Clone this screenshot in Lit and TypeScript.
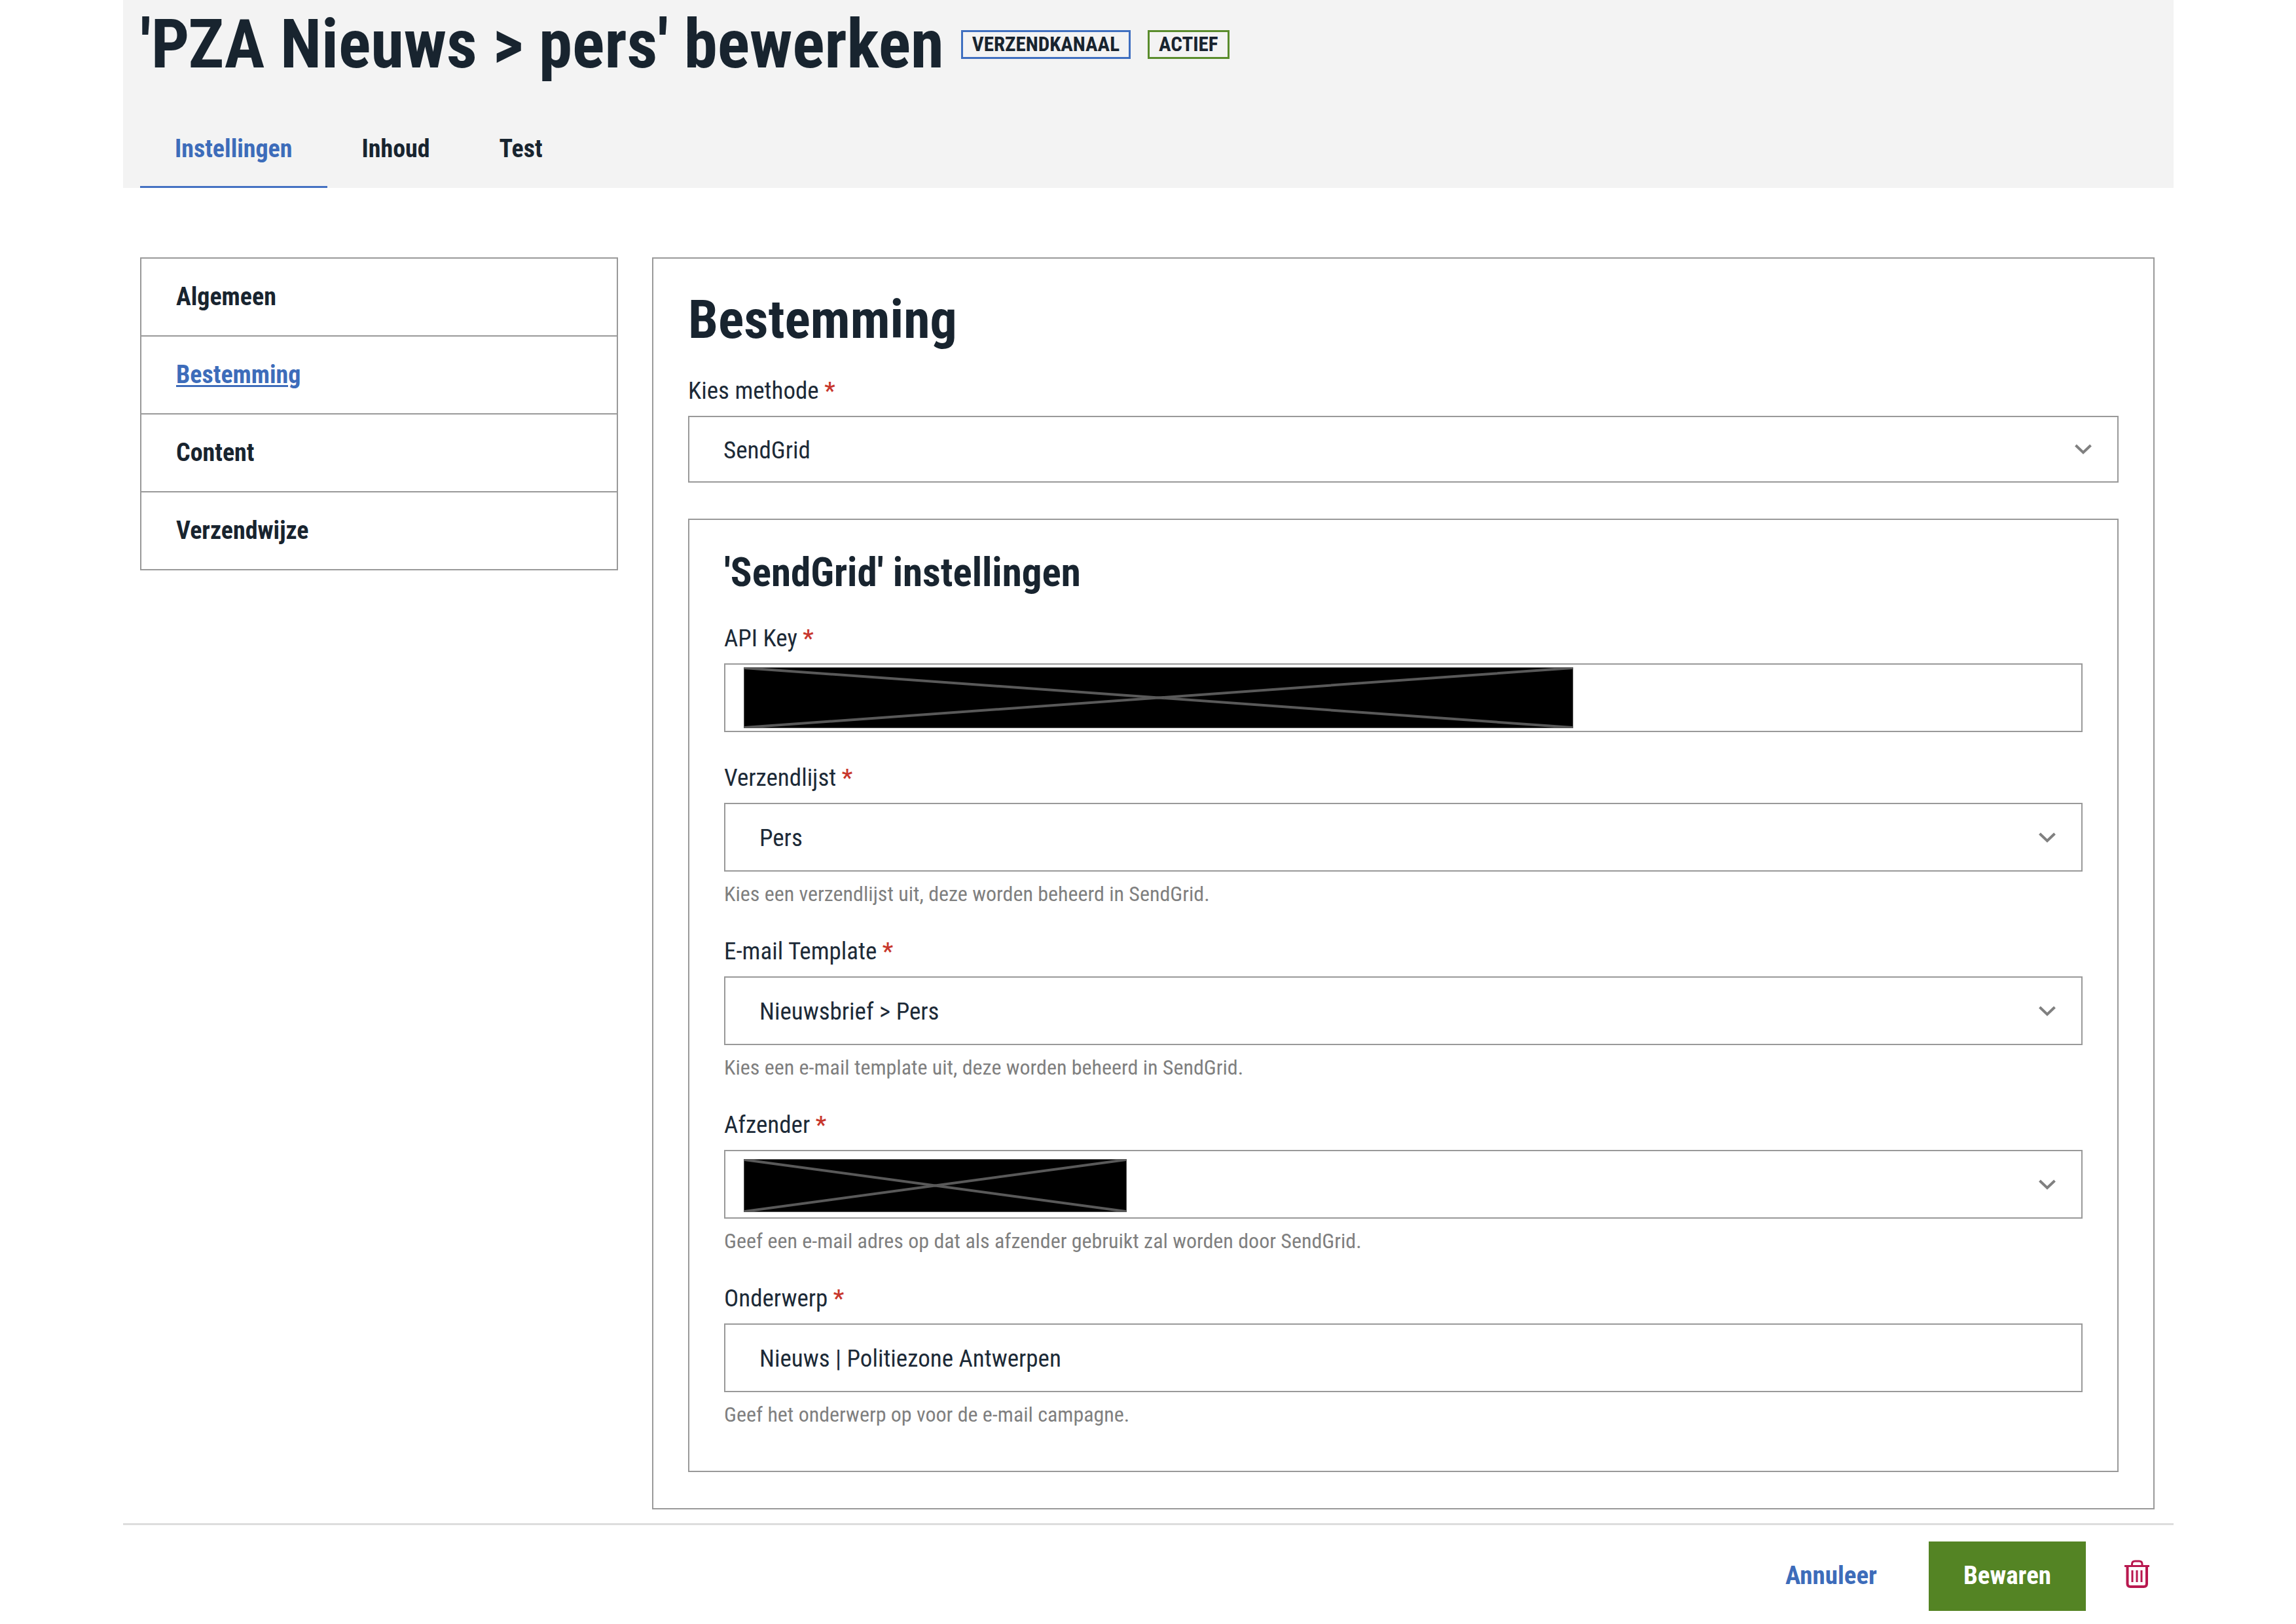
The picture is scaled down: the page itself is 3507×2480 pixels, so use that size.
import { LitElement, html, css, svg, nothing } from "lit";
import { customElement, property, state } from "lit/decorators.js";
import { classMap } from "lit/directives/class-map.js";

type FieldKind = "text" | "select";

interface FieldConfig {
  id: string;
  label: string;
  kind: FieldKind;
  value?: string;
  help?: string;
  redacted?: "long" | "short";
}

const METHOD: FieldConfig = {
  id: "method",
  label: "Kies methode",
  kind: "select",
  value: "SendGrid",
};

const SENDGRID_FIELDS: FieldConfig[] = [
  { id: "api-key", label: "API Key", kind: "text", redacted: "long" },
  {
    id: "list",
    label: "Verzendlijst",
    kind: "select",
    value: "Pers",
    help: "Kies een verzendlijst uit, deze worden beheerd in SendGrid.",
  },
  {
    id: "template",
    label: "E-mail Template",
    kind: "select",
    value: "Nieuwsbrief > Pers",
    help: "Kies een e-mail template uit, deze worden beheerd in SendGrid.",
  },
  {
    id: "sender",
    label: "Afzender",
    kind: "select",
    redacted: "short",
    help: "Geef een e-mail adres op dat als afzender gebruikt zal worden door SendGrid.",
  },
  {
    id: "subject",
    label: "Onderwerp",
    kind: "text",
    value: "Nieuws | Politiezone Antwerpen",
    help: "Geef het onderwerp op voor de e-mail campagne.",
  },
];

@customElement("form-field")
export class FormField extends LitElement {
  @property({ attribute: false }) config!: FieldConfig;
  @property({ type: Boolean, reflect: true }) compact = false;

  static styles = css`
    :host {
      display: block;
    }
    .label {
      display: block;
      margin-bottom: 14px;
      font-size: 37px;
      line-height: 48px;
    }
    .required {
      color: #c8372d;
      font-weight: 500;
    }
    .box {
      display: grid;
      align-items: center;
    }
    .box > * {
      grid-area: 1 / 1;
    }
    .control {
      appearance: none;
      box-sizing: border-box;
      width: 100%;
      height: 105px;
      margin: 0;
      padding: 2px 52px 0;
      border: 2px solid #999;
      border-radius: 0;
      background: #fff;
      color: inherit;
      font: inherit;
      font-size: 37px;
    }
    :host([compact]) .control {
      height: 102px;
    }
    .chevron {
      justify-self: end;
      width: 26px;
      height: 16px;
      margin-right: 41px;
      fill: none;
      stroke: #808080;
      stroke-width: 4;
      pointer-events: none;
    }
    .redaction {
      box-sizing: border-box;
      max-width: 90%;
      margin-left: 30px;
      border: 1px solid #555;
      background: #000;
      stroke: #595959;
      stroke-width: 4;
      pointer-events: none;
    }
    .long {
      width: 1267px;
      height: 93px;
    }
    .short {
      width: 585px;
      height: 81px;
      margin-top: 4px;
    }
    .help {
      margin: 17px 0 0;
      color: #7f7f7f;
      font-size: 32px;
      line-height: 35px;
    }
  `;

  private renderControl() {
    const { id, kind, value = "" } = this.config;
    return kind === "select"
      ? html`<select class="control" id=${id} required>
            <option selected>${value}</option>
          </select>
          <svg class="chevron" viewBox="0 0 26 16" aria-hidden="true">
            <path d="M1.5 2L13 13L24.5 2" />
          </svg>`
      : html`<input class="control" id=${id} type="text" .value=${value} required />`;
  }

  private renderRedaction() {
    const { redacted } = this.config;
    if (!redacted) return nothing;
    return html`<svg
      class="redaction ${redacted}"
      viewBox="0 0 100 100"
      preserveAspectRatio="none"
      aria-hidden="true"
    >
      ${svg`<path d="M0 0L100 100M0 100L100 0" vector-effect="non-scaling-stroke" />`}
    </svg>`;
  }

  render() {
    const { id, label, help } = this.config;
    return html`
      <label class="label" for=${id}>${label} <span class="required">*</span></label>
      <div class="box">${this.renderControl()} ${this.renderRedaction()}</div>
      ${help ? html`<p class="help">${help}</p>` : nothing}
    `;
  }
}

@customElement("app-root")
export class AppRoot extends LitElement {
  @state() private tab = "Instellingen";
  @state() private section = "Bestemming";

  private tabs = ["Instellingen", "Inhoud", "Test"];
  private sections = ["Algemeen", "Bestemming", "Content", "Verzendwijze"];

  static styles = css`
    :host {
      display: block;
      padding: 0 187px 0 188px;
      background: #fff;
      color: #1c2a37;
      font-family: "Roboto Condensed", Roboto, sans-serif;
    }
    h1,
    h2,
    h3,
    ul {
      margin: 0;
      padding: 0;
    }
    a {
      color: inherit;
      text-decoration: none;
    }
    .header {
      padding: 12px 26px 0;
      background: #f3f3f3;
      color: #18242f;
    }
    .title-row {
      display: flex;
      flex-wrap: wrap;
      align-items: center;
      column-gap: 26px;
      margin-bottom: 54px;
    }
    .title {
      font-size: 103px;
      line-height: 112px;
      font-weight: 700;
    }
    .badge {
      padding: 0 14px;
      border: 3px solid #3f6fc0;
      font-size: 31px;
      line-height: 38px;
      font-weight: 700;
    }
    .badge.active {
      border-color: #5a8c2c;
    }
    .tabs {
      display: flex;
    }
    .tab {
      padding: 25px 53px 33px;
      border-bottom: 3px solid transparent;
      font-size: 38px;
      line-height: 48px;
      font-weight: 700;
    }
    .tab.current {
      border-color: #4471c2;
      color: #3d6cba;
    }
    .content {
      display: grid;
      grid-template-columns: minmax(0, 730fr) minmax(0, 2295fr);
      align-items: start;
      column-gap: 52px;
      padding: 106px 29px 21px 26px;
    }
    .sections {
      border: 2px solid #999;
      list-style: none;
    }
    .section + .section {
      border-top: 2px solid #999;
    }
    .section-link {
      display: block;
      padding: 34px 53px 34px;
      color: #18242f;
      font-size: 38px;
      line-height: 49px;
      font-weight: 700;
    }
    .section-link.current {
      color: #3d6cba;
      text-decoration: underline;
      text-decoration-thickness: 3px;
      text-underline-offset: 3px;
    }
    .panel {
      padding: 45px 53px 55px;
      border: 2px solid #999;
    }
    .panel-title {
      margin-bottom: 37px;
      color: #18242f;
      font-size: 82px;
      line-height: 96px;
    }
    .group {
      margin-top: 55px;
      padding: 44px 53px 68px;
      border: 2px solid #999;
    }
    .group-title {
      margin-bottom: 41px;
      color: #18242f;
      font-size: 61px;
      line-height: 72px;
    }
    .fields {
      display: grid;
      row-gap: 46px;
    }
    .footer {
      display: flex;
      justify-content: flex-end;
      align-items: center;
      column-gap: 59px;
      padding: 25px 37px 20px;
      border-top: 3px solid #ddd;
    }
    .button {
      height: 106px;
      margin: 0;
      padding: 0 53px 2px;
      border: 0;
      background: #548424;
      color: #fff;
      font: inherit;
      font-size: 39px;
      font-weight: 700;
    }
    .button.plain {
      padding: 0 20px 2px;
      background: none;
      color: #3d6cba;
    }
    .delete {
      display: flex;
      margin: 0;
      padding: 0 0 7px;
      border: 0;
      background: none;
    }
    .trash {
      width: 38px;
      height: 44px;
      fill: none;
      stroke: #b8184f;
      stroke-width: 3;
    }
  `;

  private renderHeader() {
    return html`<header class="header">
      <div class="title-row">
        <h1 class="title">'PZA Nieuws > pers' bewerken</h1>
        <span class="badge">VERZENDKANAAL</span>
        <span class="badge active">ACTIEF</span>
      </div>
      <nav class="tabs">
        ${this.tabs.map(
          (name) => html`<a
            href="#${name}"
            class=${classMap({ tab: true, current: name === this.tab })}
            @click=${() => (this.tab = name)}
            >${name}</a
          >`
        )}
      </nav>
    </header>`;
  }

  private renderSections() {
    return html`<nav>
      <ul class="sections">
        ${this.sections.map(
          (name) => html`<li class="section">
            <a
              href="#${name}"
              class=${classMap({ "section-link": true, current: name === this.section })}
              @click=${() => (this.section = name)}
              >${name}</a
            >
          </li>`
        )}
      </ul>
    </nav>`;
  }

  render() {
    return html`
      ${this.renderHeader()}
      <main class="content">
        ${this.renderSections()}
        <section class="panel">
          <h2 class="panel-title">Bestemming</h2>
          <form-field compact .config=${METHOD}></form-field>
          <div class="group">
            <h3 class="group-title">'SendGrid' instellingen</h3>
            <div class="fields">
              ${SENDGRID_FIELDS.map((f) => html`<form-field .config=${f}></form-field>`)}
            </div>
          </div>
        </section>
      </main>
      <footer class="footer">
        <button class="button plain" type="button">Annuleer</button>
        <button class="button" type="submit">Bewaren</button>
        <button class="delete" type="button" aria-label="Verwijderen">
          <svg class="trash" viewBox="0 0 38 44" aria-hidden="true">
            <path d="M0 9.5H38" />
            <path d="M11.5 9V6.5Q11.5 2 16 2H22.5Q27 2 27 6.5V9" />
            <path d="M4.5 10V36.5Q4.5 41 9 41H29.5Q34 41 34 36.5V10" stroke-width="4" />
            <path d="M12 16V34M19 16V34M26 16V34" />
          </svg>
        </button>
      </footer>
    `;
  }
}
